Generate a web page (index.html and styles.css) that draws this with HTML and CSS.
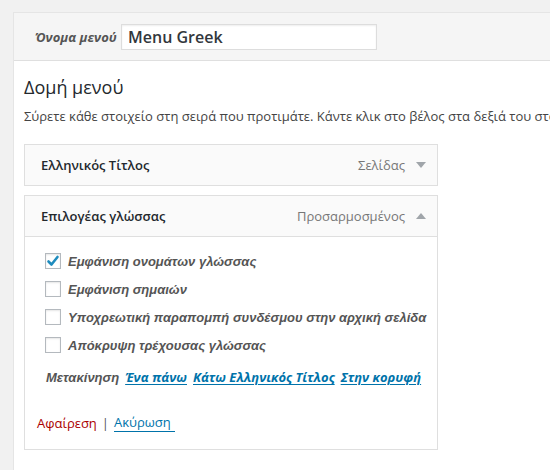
FILE: index.html
```html
<!DOCTYPE html>
<html lang="el">
<head>
<meta charset="utf-8">
<link rel="stylesheet" href="styles.css">
</head>
<body>
<div class="panel">
  <div class="panel-head">
    <label class="name-label">Όνομα μενού</label>
    <div class="name-input">Menu Greek</div>
  </div>
  <div class="panel-body">
    <h3 class="title">Δομή μενού</h3>
    <p class="desc">Σύρετε κάθε στοιχείο στη σειρά που προτιμάτε. Κάντε κλικ στο βέλος στα δεξιά του στοιχείου για να εμφανίσετε περισσότερες επιλογές.</p>
    <div class="items">
      <div class="item">
        <div class="item-bar">
          <span class="item-title">Ελληνικός Τίτλος</span>
          <span class="item-type">Σελίδας</span>
          <svg class="arrow" width="10" height="6" viewBox="0 0 10 6"><path d="M0 0 L10 0 L5 6 Z" fill="#a0a5aa"/></svg>
        </div>
      </div>
      <div class="item">
        <div class="item-bar">
          <span class="item-title">Επιλογέας γλώσσας</span>
          <span class="item-type">Προσαρμοσμένος</span>
          <svg class="arrow" width="10" height="6" viewBox="0 0 10 6"><path d="M0 6 L10 6 L5 0 Z" fill="#a0a5aa"/></svg>
        </div>
        <div class="item-settings">
          <div class="opts">
            <div class="opt"><span class="cb checked"><svg width="14" height="14" viewBox="0 0 14 14"><path d="M2.5 7.5 L5.5 10.5 L11.5 3" fill="none" stroke="#1e8cbe" stroke-width="2.6" stroke-linecap="round" stroke-linejoin="round"/></svg></span><span class="opt-label">Εμφάνιση ονομάτων γλώσσας</span></div>
            <div class="opt"><span class="cb"></span><span class="opt-label">Εμφάνιση σημαιών</span></div>
            <div class="opt"><span class="cb"></span><span class="opt-label">Υποχρεωτική παραπομπή συνδέσμου στην αρχική σελίδα</span></div>
            <div class="opt"><span class="cb"></span><span class="opt-label">Απόκρυψη τρέχουσας γλώσσας</span></div>
          </div>
          <div class="move">
            <span class="move-label">Μετακίνηση</span>
            <a class="move-link">Ένα πάνω</a>
            <a class="move-link">Κάτω Ελληνικός Τίτλος</a>
            <a class="move-link">Στην κορυφή</a>
          </div>
          <div class="actions">
            <a class="remove">Αφαίρεση</a>
            <span class="sep">|</span>
            <a class="cancel">Ακύρωση</a>
          </div>
        </div>
      </div>
    </div>
  </div>
</div>
</body>
</html>
```
FILE: styles.css
```css
html, body {
  margin: 0;
  padding: 0;
}
body {
  background: #f1f1f1;
  font-family: "Open Sans", "Liberation Sans", sans-serif;
  font-size: 13px;
  color: #444;
  width: 550px;
  height: 470px;
  overflow: hidden;
}
.panel {
  margin: 12px 0 0 13px;
  width: 537px;
  border-top: 1px solid #e5e5e5;
  border-left: 1px solid #e5e5e5;
  background: #fff;
  height: 457px;
  overflow: hidden;
}
.panel-head {
  height: 47px;
  background: #f5f5f5;
  border-bottom: 1px solid #dfdfdf;
  display: flex;
  align-items: center;
  padding-left: 21px;
}
.name-label {
  font-style: italic;
  font-weight: 700;
  color: #555;
  font-size: 13px;
  width: 86px;
}
.name-input {
  width: 242px;
  height: 24px;
  line-height: 24px;
  border: 1px solid #ddd;
  background: #fff;
  box-shadow: inset 0 1px 2px rgba(0,0,0,0.07);
  padding: 0 6px;
  font-size: 16px;
  font-weight: 600;
  color: #32373c;
  margin-top: 1px;
}
.panel-body {
  padding-left: 10px;
}
.title {
  margin: 14px 0 0 0;
  font-size: 18px;
  line-height: 24px;
  font-weight: 400;
  color: #23282d;
}
.desc {
  margin: 7px 0 0 0;
  line-height: 20px;
  white-space: nowrap;
  color: #444;
}
.items {
  margin-top: 18px;
  width: 414px;
  display: flex;
  flex-direction: column;
  gap: 9px;
}
.item-bar {
  height: 40px;
  border: 1px solid #dfdfdf;
  background: #fafafa;
  display: flex;
  align-items: center;
  padding: 0 11px 0 16px;
}
.item-title {
  font-weight: 600;
  color: #23282d;
  flex: 1;
}
.item-type {
  color: #777;
  margin-right: 11px;
}
.arrow {
  display: block;
}
.item-settings {
  border: 1px solid #dfdfdf;
  border-top: none;
  background: #fff;
  padding: 10px 0 16px 20px;
}
.opt {
  height: 28px;
  display: flex;
  align-items: center;
}
.cb {
  width: 14px;
  height: 14px;
  border: 1px solid #b4b9be;
  background: #fff;
  box-shadow: inset 0 1px 2px rgba(0,0,0,0.1);
  margin-right: 7px;
  display: flex;
  align-items: center;
  justify-content: center;
  flex: none;
}
.opt-label {
  font-family: "Liberation Sans", Arial, sans-serif;
  font-style: italic;
  font-weight: 700;
  color: #555;
  font-size: 13px;
}
.move {
  margin-top: 8px;
  height: 20px;
  display: flex;
  align-items: center;
  gap: 6px;
  padding-left: 1px;
}
.move-label {
  font-family: "Liberation Sans", Arial, sans-serif;
  font-style: italic;
  font-weight: 700;
  color: #555;
}
.move-link {
  font-style: italic;
  font-weight: 700;
  color: #0073aa;
  text-decoration: underline;
  text-underline-offset: 2px;
}
.actions {
  margin-top: 26px;
  margin-left: -8px;
  height: 20px;
  display: flex;
  align-items: center;
}
.remove {
  color: #a00;
}
.sep {
  color: #555;
  margin: 0 5px 0 5px;
}
.cancel {
  color: #0073aa;
  border-bottom: 1px solid #0073aa;
  padding-right: 4px;
  line-height: 17px;
}
```
